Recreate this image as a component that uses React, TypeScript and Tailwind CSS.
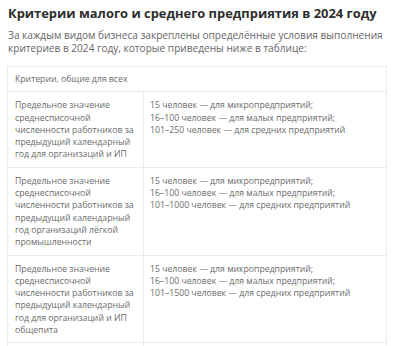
const rows = [
  {
    label: "Предельное значение среднесписочной численности работников за предыдущий календарный год для организаций и ИП",
    values: [
      "15 человек — для микропредприятий;",
      "16–100 человек — для малых предприятий;",
      "101–250 человек — для средних предприятий",
    ],
  },
  {
    label: "Предельное значение среднесписочной численности работников за предыдущий календарный год организаций лёгкой промышленности",
    values: [
      "15 человек — для микропредприятий;",
      "16–100 человек — для малых предприятий;",
      "101–1000 человек — для средних предприятий",
    ],
  },
  {
    label: "Предельное значение среднесписочной численности работников за предыдущий календарный год для организаций и ИП общепита",
    values: [
      "15 человек — для микропредприятий;",
      "16–100 человек — для малых предприятий;",
      "101–1500 человек — для средних предприятий",
    ],
  },
];

export default function App() {
  return (
    <div className="h-[346px] overflow-hidden bg-white pl-[8px] pr-[10px] pt-[4px] font-['Open_Sans',sans-serif]">
      <h2 className="whitespace-nowrap text-[12.9px] font-bold leading-[18px] text-[#2e2e2e]">
        Критерии малого и среднего предприятия в 2024 году
      </h2>
      <p className="mt-[7px] text-[10.1px] leading-[13px] text-[#666]">
        За каждым видом бизнеса закреплены определённые условия выполнения критериев в 2024 году, которые приведены ниже в таблице:
      </p>

      <table className="mt-[11px] w-[380px] -ml-px table-fixed border-collapse text-[8.7px] leading-[12.3px] text-[#6a6a6a]">
        <colgroup>
          <col className="w-[136px]" />
          <col />
        </colgroup>
        <tbody>
          <tr>
            <td colSpan={2} className="border border-[#ebebeb] px-[7px] py-[6px]">
              Критерии, общие для всех
            </td>
          </tr>
          {rows.map((row, i) => (
            <tr key={i}>
              <td className="border border-[#ebebeb] pl-[7px] pr-[3px] pt-[7px] pb-[6px] align-top">{row.label}</td>
              <td className="border border-[#ebebeb] px-[6px] pt-[7px] pb-[6px] align-top">
                {row.values.map((v) => (
                  <div key={v}>{v}</div>
                ))}
              </td>
            </tr>
          ))}
          {/* next row starts just above the fold */}
          <tr>
            <td className="h-[40px] border border-[#ebebeb]" />
            <td className="h-[40px] border border-[#ebebeb]" />
          </tr>
        </tbody>
      </table>
    </div>
  );
}
